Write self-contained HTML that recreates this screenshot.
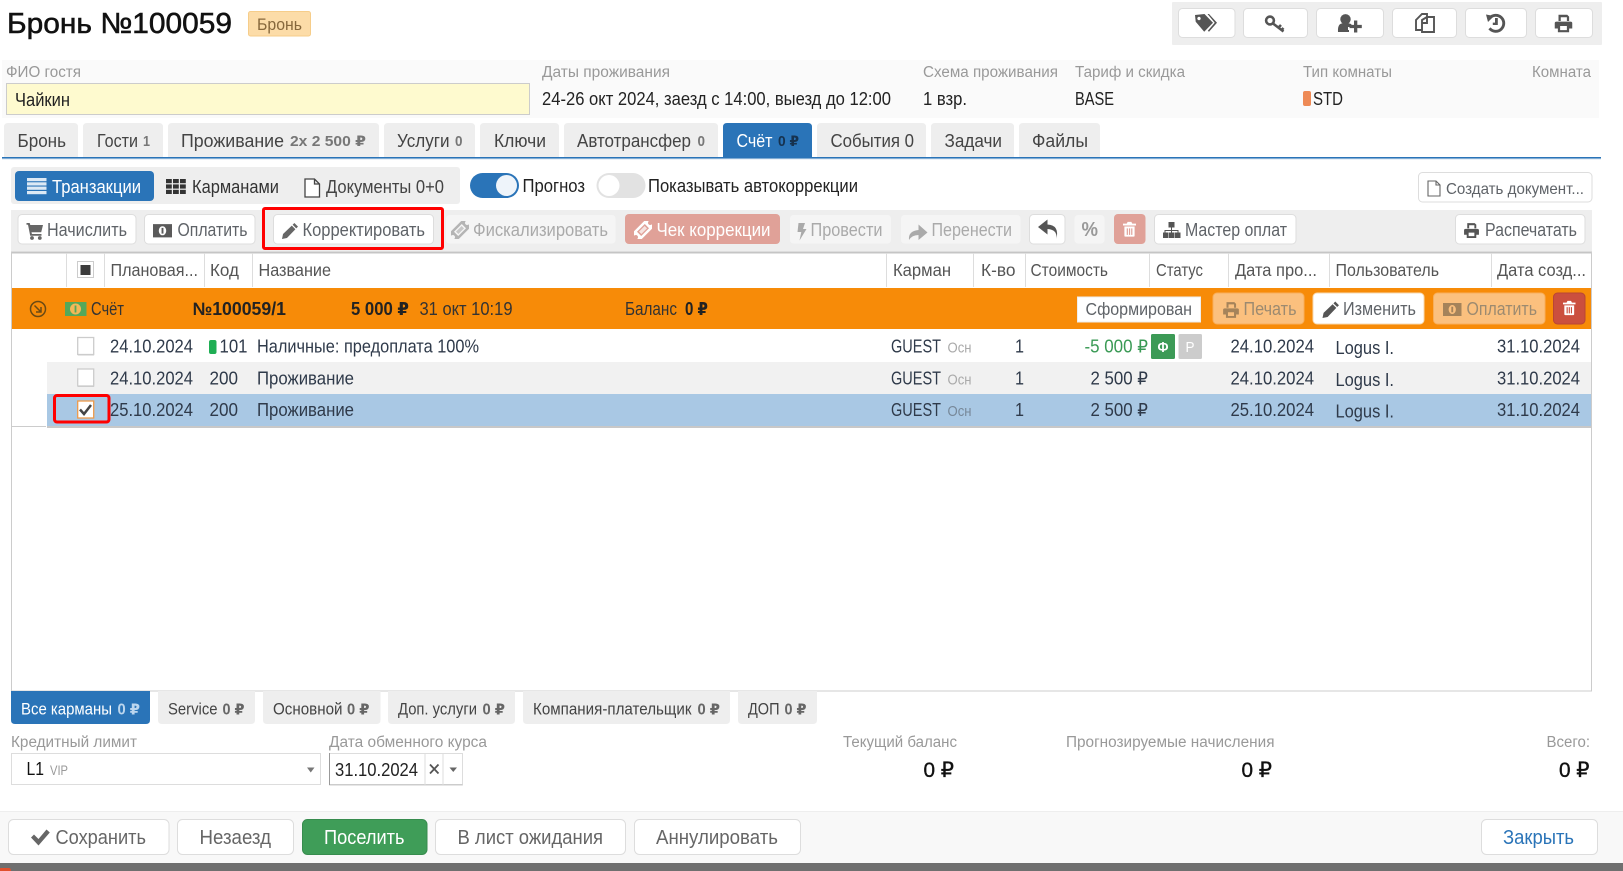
<!DOCTYPE html>
<html lang="ru"><head><meta charset="utf-8"><title>Бронь №100059</title>
<style>
html,body{margin:0;padding:0;background:#fff;width:1623px;height:871px;overflow:hidden}
svg{display:block}
text{font-family:"Liberation Sans","DejaVu Sans",sans-serif;font-size:18px;fill:#333}
.lb{font-size:15.5px;fill:#999}
.v{font-size:18px;fill:#222}
.tab{font-size:18.5px;fill:#444}
.sm{font-size:14.5px;font-weight:bold;fill:#777}
.btn{font-size:18px;fill:#5f6368}
.dis{font-size:18px;fill:#aaa}
.h{font-size:17.5px;fill:#555}
.r{font-size:18px;fill:#2f3a4a}
.t2{font-size:16.5px;fill:#444}
.b2{font-size:15.5px;font-weight:bold;fill:#666}
.f{font-size:20px;fill:#666}
.big{font-size:21px;fill:#111;stroke:#111;stroke-width:.35px}
.bb{fill:#fff;stroke:#ddd}
.bd{fill:#f5f5f5;stroke:#eee}
</style></head><body>
<svg width="1623" height="871" viewBox="0 0 1623 871" xmlns="http://www.w3.org/2000/svg">
<defs>
<symbol id="print" viewBox="0 0 16 16"><path fill-rule="evenodd" d="M4 1h7l1.500 1.500V6h-1.800V3H5.800v3H4zM1 7.700Q1 6.500 2.500 6.500h11q1.500 0 1.500 1.200V12h-2.500v3h-9v-3H1zM5.300 10v3.300h5.400V10z"/></symbol>
<symbol id="cash" viewBox="0 0 20 14"><path fill-rule="evenodd" d="M0 0h20v14H0zM10 2.200a3.900 4.800 0 1 0 .01 0z"/><rect x="9" y="4" width="2" height="6"/></symbol>
<symbol id="trash" viewBox="0 0 14 16"><path fill-rule="evenodd" d="M5 0h4l1 2h4v2H0V2h4zM1.500 5h11v10q0 1-1 1h-9q-1 0-1-1zM4 7v7h1.300V7zM6.400 7v7h1.300V7zM8.800 7v7h1.300V7z"/></symbol>
<symbol id="pencil" viewBox="0 0 16 16"><path d="M12 .5l3.500 3.500-1.700 1.700-3.500-3.500zM9.500 3l3.500 3.500L4.800 15 0 16l1-4.800z"/></symbol>
<symbol id="ticket" viewBox="0 0 18 18"><g transform="translate(9 9) rotate(-45)"><path fill-rule="evenodd" d="M-10-5.500H10v3.500a2 2 0 0 0 0 4v3.500H-10V2a2 2 0 0 0 0-4zM-5.500-3v6h11v-6z"/><rect x="-4" y="-1.700" width="8" height="3.400" opacity=".7"/></g></symbol>
</defs>

<!-- header -->
<text x="7" y="33" style="font-size:29px;fill:#111;stroke:#111;stroke-width:.55px" textLength="225" lengthAdjust="spacingAndGlyphs">Бронь №100059</text>
<rect x="248.500" y="11.500" width="62" height="24.500" rx="2" fill="#fcdca8" stroke="#f6cd8a"/>
<text x="257" y="30" style="font-size:17px;fill:#87683c" textLength="45" lengthAdjust="spacingAndGlyphs">Бронь</text>

<rect x="1172" y="2" width="430" height="43" fill="#eee" rx="1"/>
<g class="bb">
<rect x="1178.500" y="8.500" width="56.500" height="29" rx="4"/><rect x="1243.500" y="8.500" width="64" height="29" rx="4"/><rect x="1316.500" y="8.500" width="67" height="29" rx="4"/><rect x="1392.500" y="8.500" width="64" height="29" rx="4"/><rect x="1465.500" y="8.500" width="61" height="29" rx="4"/><rect x="1535.500" y="8.500" width="57" height="29" rx="4"/>
</g>
<g fill="#555">
<!-- tags -->
<path fill-rule="evenodd" d="M1195 15l9.500-1 8.500 8.700-8.800 9-8.500-10zM1199 16.800a1.700 1.700 0 1 0 .01 0z"/><path d="M1207.500 14h1.500l8 8.700-8 9-1.200-1 6.900-8z"/>
<!-- user plus -->
<circle cx="1345.500" cy="19.300" r="5.200"/><path d="M1338 32q-.5-7.500 3.500-8.500h8q1.500.3 2 1v2.500h-3.500v3h1v2z"/><path d="M1354 20.500h3.300v4.400h4.500v3.200h-4.500v4.400H1354v-4.400h-4.500v-3.200h4.500z"/>
<!-- history -->
<path d="M1486 14.500l8 1.500-6 6z"/><path d="M1495 18h2.800v7h-5v-2.400h2.200z"/>
</g>
<!-- key -->
<g fill="none" stroke="#555"><circle cx="1270" cy="20.500" r="3.900" stroke-width="2.600"/><path d="M1273 23.500l10.500 8M1278.500 27.500l2.500-2.500M1281.500 30l2-2" stroke-width="2.600"/></g>
<!-- copy -->
<g fill="none" stroke="#555" stroke-width="1.900"><path d="M1427 17.500v-3.500h-5l-6 6v10h6"/><path d="M1422 20l5-3h7v15h-12z"/><path d="M1427 17.500v5.500h-5"/></g>
<path d="M1489.500 18.300A8 8 0 1 1 1489.500 28.300" fill="none" stroke="#555" stroke-width="2.900"/>
<use href="#print" x="1553.500" y="13.500" width="20" height="20" fill="#555"/>

<!-- info -->
<rect x="2" y="60" width="1597" height="58" fill="#fafafa"/>
<text class="lb" x="6" y="77" textLength="75" lengthAdjust="spacingAndGlyphs">ФИО гостя</text>
<text class="lb" x="542" y="77" textLength="128" lengthAdjust="spacingAndGlyphs">Даты проживания</text>
<text class="lb" x="923" y="77" textLength="135" lengthAdjust="spacingAndGlyphs">Схема проживания</text>
<text class="lb" x="1075" y="77" textLength="110" lengthAdjust="spacingAndGlyphs">Тариф и скидка</text>
<text class="lb" x="1303" y="77" textLength="89" lengthAdjust="spacingAndGlyphs">Тип комнаты</text>
<text class="lb" x="1532" y="77" textLength="59" lengthAdjust="spacingAndGlyphs">Комната</text>
<rect x="6.500" y="83.500" width="523" height="31" fill="#fefacf" stroke="#ccc"/>
<text class="v" x="15" y="106" textLength="55" lengthAdjust="spacingAndGlyphs">Чайкин</text>
<text class="v" x="542" y="105" textLength="349" lengthAdjust="spacingAndGlyphs">24-26 окт 2024, заезд с 14:00, выезд до 12:00</text>
<text class="v" x="923" y="105" textLength="44" lengthAdjust="spacingAndGlyphs">1 взр.</text>
<text class="v" x="1075" y="105" textLength="39" lengthAdjust="spacingAndGlyphs">BASE</text>
<rect x="1303" y="91" width="8" height="15" rx="2" fill="#ee8a56"/>
<text class="v" x="1313" y="105" textLength="30" lengthAdjust="spacingAndGlyphs">STD</text>

<!-- tabs -->
<g fill="#eee">
<path d="M4 157v-30q0-4 4-4h66q4 0 4 4v30z"/>
<path d="M83 157v-30q0-4 4-4h72q4 0 4 4v30z"/>
<path d="M168 157v-30q0-4 4-4h203q4 0 4 4v30z"/>
<path d="M384 157v-30q0-4 4-4h83q4 0 4 4v30z"/>
<path d="M480 157v-30q0-4 4-4h71q4 0 4 4v30z"/>
<path d="M564 157v-30q0-4 4-4h146q4 0 4 4v30z"/>
<path d="M723 157v-30q0-4 4-4h81q4 0 4 4v30z" fill="#2a74b8"/>
<path d="M817 157v-30q0-4 4-4h101q4 0 4 4v30z"/>
<path d="M931 157v-30q0-4 4-4h75q4 0 4 4v30z"/>
<path d="M1019 157v-30q0-4 4-4h73q4 0 4 4v30z"/>
</g>
<rect x="2" y="157" width="1599" height="1.500" fill="#2a74b8"/><rect x="2" y="158.500" width="1599" height="1" fill="#d5e3f1"/>
<text class="tab" x="17.500" y="147" textLength="48.500" lengthAdjust="spacingAndGlyphs">Бронь</text>
<text class="tab" x="97" y="147" textLength="41" lengthAdjust="spacingAndGlyphs">Гости</text><text class="sm" x="143" y="146" textLength="7" lengthAdjust="spacingAndGlyphs">1</text>
<text class="tab" x="181" y="147" textLength="103" lengthAdjust="spacingAndGlyphs">Проживание</text><text class="sm" x="290" y="146" textLength="76" lengthAdjust="spacingAndGlyphs">2x 2 500 ₽</text>
<text class="tab" x="397" y="147" textLength="52.500" lengthAdjust="spacingAndGlyphs">Услуги</text><text class="sm" x="455" y="146" textLength="7.500" lengthAdjust="spacingAndGlyphs">0</text>
<text class="tab" x="494" y="147" textLength="52" lengthAdjust="spacingAndGlyphs">Ключи</text>
<text class="tab" x="577" y="147" textLength="114" lengthAdjust="spacingAndGlyphs">Автотрансфер</text><text class="sm" x="697.500" y="146" textLength="7.500" lengthAdjust="spacingAndGlyphs">0</text>
<text class="tab" style="fill:#fff" x="736.500" y="147" textLength="36" lengthAdjust="spacingAndGlyphs">Счёт</text><text class="sm" style="fill:#16324f" x="778" y="146" textLength="21" lengthAdjust="spacingAndGlyphs">0 ₽</text>
<text class="tab" x="830.500" y="147" textLength="83.500" lengthAdjust="spacingAndGlyphs">События 0</text>
<text class="tab" x="944.500" y="147" textLength="57.500" lengthAdjust="spacingAndGlyphs">Задачи</text>
<text class="tab" x="1032" y="147" textLength="56" lengthAdjust="spacingAndGlyphs">Файлы</text>

<!-- view switch -->
<rect x="11" y="167" width="449" height="37" rx="3" fill="#eee"/>
<rect x="15" y="171" width="139" height="30" rx="4" fill="#2a74b8"/>
<g fill="#dce9f5"><rect x="27" y="178" width="19.500" height="3.200"/><rect x="27" y="182.300" width="19.500" height="3.200"/><rect x="27" y="186.600" width="19.500" height="3.200"/><rect x="27" y="191" width="19.500" height="3.200"/></g>
<text class="v" style="fill:#fff" x="52" y="193" textLength="89" lengthAdjust="spacingAndGlyphs">Транзакции</text>
<g fill="#333"><rect x="166" y="179" width="5.800" height="4.200"/><rect x="173" y="179" width="5.800" height="4.200"/><rect x="180" y="179" width="5.800" height="4.200"/><rect x="166" y="184.400" width="5.800" height="4.200"/><rect x="173" y="184.400" width="5.800" height="4.200"/><rect x="180" y="184.400" width="5.800" height="4.200"/><rect x="166" y="189.800" width="5.800" height="4.200"/><rect x="173" y="189.800" width="5.800" height="4.200"/><rect x="180" y="189.800" width="5.800" height="4.200"/></g>
<text class="v" style="fill:#333" x="192" y="193" textLength="87" lengthAdjust="spacingAndGlyphs">Карманами</text>
<path d="M305 179h9.500l5 5v13H305zM314.500 179v5h5" fill="#fff" stroke="#444" stroke-width="1.300"/>
<text class="v" style="fill:#444" x="326" y="193" textLength="118" lengthAdjust="spacingAndGlyphs">Документы 0+0</text>
<rect x="470" y="173" width="49" height="25" rx="12.500" fill="#2a74b8"/><circle cx="506.500" cy="185.500" r="10.500" fill="#eef4fa"/>
<text class="v" x="522.500" y="192" textLength="62.500" lengthAdjust="spacingAndGlyphs">Прогноз</text>
<rect x="596.500" y="173" width="49" height="25" rx="12.500" fill="#e2e2e2"/><circle cx="609" cy="185.500" r="10.500" fill="#fff"/>
<text class="v" x="648" y="192" textLength="210" lengthAdjust="spacingAndGlyphs">Показывать автокоррекции</text>
<rect class="bb" x="1418.500" y="172.500" width="173.500" height="29.500" rx="4"/>
<path d="M1428 181h8l4 4v11h-12zM1436 181v4h4" fill="#fff" stroke="#666" stroke-width="1.100"/>
<text class="btn" style="font-size:16px" x="1446" y="194" textLength="138" lengthAdjust="spacingAndGlyphs">Создать документ...</text>

<!-- toolbar -->
<rect x="11" y="210" width="1581" height="42" fill="#eee"/>
<rect class="bb" x="18" y="214.500" width="118" height="29.500" rx="4"/>
<rect class="bb" x="144.500" y="214.500" width="110.500" height="29.500" rx="4"/>
<rect class="bb" x="273.500" y="214.500" width="160" height="29.500" rx="4"/>
<rect class="bd" x="445.500" y="214.500" width="170.500" height="29.500" rx="4"/>
<rect x="625" y="214" width="155" height="30" rx="4" fill="#e0a198"/>
<rect class="bd" x="789.500" y="214.500" width="102" height="29.500" rx="4"/>
<rect class="bd" x="900.500" y="214.500" width="120.500" height="29.500" rx="4"/>
<rect class="bb" x="1029.500" y="214.500" width="35.500" height="29.500" rx="4"/>
<rect class="bd" x="1074" y="214.500" width="31" height="29.500" rx="4"/>
<rect x="1114" y="214" width="31.500" height="30" rx="4" fill="#e0a198"/>
<rect class="bb" x="1154.500" y="214.500" width="141.500" height="29.500" rx="4"/>
<rect class="bb" x="1455.500" y="214.500" width="129.500" height="29.500" rx="4"/>
<path d="M26.500 223h3.200l.6 2H43l-1.800 7.300H31.500l.4 1.700h9.600v1.800H30.200L28 224.800h-1.500z" fill="#666"/><circle cx="32" cy="238" r="1.900" fill="#666"/><circle cx="39.800" cy="238" r="1.900" fill="#666"/>
<text class="btn" x="47" y="236" textLength="80" lengthAdjust="spacingAndGlyphs">Начислить</text>
<use href="#cash" x="153" y="224" width="19" height="13.500" fill="#5a5a5a"/>
<text class="btn" x="177.500" y="236" textLength="70" lengthAdjust="spacingAndGlyphs">Оплатить</text>
<use href="#pencil" x="282" y="222.500" width="16.500" height="16.500" fill="#666"/>
<text class="btn" x="302.500" y="236" textLength="122.500" lengthAdjust="spacingAndGlyphs">Корректировать</text>
<use href="#ticket" x="451" y="221" width="18" height="18" fill="#b4b4b4"/>
<text class="dis" x="473" y="236" textLength="135" lengthAdjust="spacingAndGlyphs">Фискализировать</text>
<use href="#ticket" x="634" y="221" width="18" height="18" fill="#fff"/>
<text class="dis" style="fill:#fff" x="656.500" y="236" textLength="114" lengthAdjust="spacingAndGlyphs">Чек коррекции</text>
<path d="M798.500 223h6.500l-2 6h3.500l-7 11.500 1.800-8.500h-3.800z" fill="#aaa"/>
<text class="dis" x="810.500" y="236" textLength="72" lengthAdjust="spacingAndGlyphs">Провести</text>
<path d="M909 240q-1-9 9.500-10v-5.500l9 8-9 7.500v-5q-6.500 0-9.500 5z" fill="#aaa"/>
<text class="dis" x="931.500" y="236" textLength="80.500" lengthAdjust="spacingAndGlyphs">Перенести</text>
<path d="M1056.500 239q1-9.500-9-10v5.500l-9.500-7.500 9.500-7.500v5q12 .5 9 14.500z" fill="#555"/>
<text x="1081.500" y="236" style="font-size:20px;font-weight:bold;fill:#999" textLength="16.500" lengthAdjust="spacingAndGlyphs">%</text>
<use href="#trash" x="1123" y="221.500" width="13" height="15.500" fill="#fff"/>
<g fill="#555"><rect x="1168.500" y="222" width="6" height="5.500"/><rect x="1163" y="232.500" width="5.500" height="5.500"/><rect x="1169" y="232.500" width="5.500" height="5.500"/><rect x="1175" y="232.500" width="5.500" height="5.500"/><path d="M1171 227.500h1v2.500h6.500v2.500h-1V231H1172v1.500h-1V231h-5.500v1.500h-1V230h6.500z"/></g>
<text class="btn" x="1185" y="236" textLength="102" lengthAdjust="spacingAndGlyphs">Мастер оплат</text>
<use href="#print" x="1463" y="222" width="17" height="17" fill="#555"/>
<text class="btn" x="1485" y="236" textLength="92" lengthAdjust="spacingAndGlyphs">Распечатать</text>

<!-- table frame -->
<rect x="11.500" y="252" width="1580" height="439" fill="#fff" stroke="#ccc"/>
<rect x="12" y="252" width="1579" height="1.500" fill="#c5c5c5"/>
<g fill="#ddd"><rect x="66" y="253" width="1" height="34"/><rect x="104" y="253" width="1" height="34"/><rect x="204" y="253" width="1" height="34"/><rect x="252" y="253" width="1" height="34"/><rect x="886" y="253" width="1" height="34"/><rect x="973" y="253" width="1" height="34"/><rect x="1025" y="253" width="1" height="34"/><rect x="1149" y="253" width="1" height="34"/><rect x="1228" y="253" width="1" height="34"/><rect x="1329" y="253" width="1" height="34"/><rect x="1491" y="253" width="1" height="34"/></g>
<rect x="77.500" y="261.500" width="16" height="16" fill="#fff" stroke="#ccc"/><rect x="80.500" y="265" width="10" height="10" fill="#3c3c3c"/>
<text class="h" x="110.500" y="276" textLength="87.500" lengthAdjust="spacingAndGlyphs">Плановая...</text>
<text class="h" x="210" y="276" textLength="29" lengthAdjust="spacingAndGlyphs">Код</text>
<text class="h" x="258.500" y="276" textLength="72.500" lengthAdjust="spacingAndGlyphs">Название</text>
<text class="h" x="893" y="276" textLength="58" lengthAdjust="spacingAndGlyphs">Карман</text>
<text class="h" x="981" y="276" textLength="34.500" lengthAdjust="spacingAndGlyphs">К-во</text>
<text class="h" x="1030.500" y="276" textLength="77.500" lengthAdjust="spacingAndGlyphs">Стоимость</text>
<text class="h" x="1156" y="276" textLength="47" lengthAdjust="spacingAndGlyphs">Статус</text>
<text class="h" x="1235" y="276" textLength="82" lengthAdjust="spacingAndGlyphs">Дата про...</text>
<text class="h" x="1335.500" y="276" textLength="103.500" lengthAdjust="spacingAndGlyphs">Пользователь</text>
<text class="h" x="1497" y="276" textLength="89" lengthAdjust="spacingAndGlyphs">Дата созд...</text>

<!-- orange row -->
<rect x="12" y="288" width="1579" height="41" fill="#f78b08"/>
<circle cx="38" cy="309" r="7.500" fill="none" stroke="#6b4a14" stroke-width="1.500"/><path d="M34.500 305.500l6 6M41 307v5h-5" fill="none" stroke="#6b4a14" stroke-width="1.500"/>
<rect x="65" y="302" width="21.500" height="14" fill="#54a85a"/><ellipse cx="75.500" cy="309" rx="5.500" ry="5.500" fill="#f4b858"/><rect x="74.600" y="305.500" width="1.800" height="7" fill="#54a85a"/>
<text class="r" style="fill:#333" x="91" y="315" textLength="33" lengthAdjust="spacingAndGlyphs">Счёт</text>
<text class="r" style="font-weight:bold;fill:#222" x="192.500" y="315" textLength="93.500" lengthAdjust="spacingAndGlyphs">№100059/1</text>
<text class="r" style="font-weight:bold;fill:#222" x="351" y="315" textLength="58" lengthAdjust="spacingAndGlyphs">5 000 ₽</text>
<text class="r" style="fill:#333" x="419.500" y="315" textLength="93" lengthAdjust="spacingAndGlyphs">31 окт 10:19</text>
<text class="r" style="fill:#333" x="625" y="315" textLength="52" lengthAdjust="spacingAndGlyphs">Баланс</text>
<text class="r" style="font-weight:bold;fill:#222" x="685" y="315" textLength="23" lengthAdjust="spacingAndGlyphs">0 ₽</text>
<rect x="1077.500" y="297" width="123" height="25" fill="#fff" stroke="#eee"/>
<text class="btn" style="font-size:17.500px" x="1085.500" y="315" textLength="106.500" lengthAdjust="spacingAndGlyphs">Сформирован</text>
<rect x="1213" y="293" width="91" height="31" rx="4" fill="#fbc07e" stroke="#f8ae5a"/>
<use href="#print" x="1222" y="301" width="18" height="18" fill="#a5835a"/>
<text class="btn" style="fill:#9c8a70" x="1243.500" y="315" textLength="53" lengthAdjust="spacingAndGlyphs">Печать</text>
<rect x="1313" y="293" width="111" height="31" rx="4" fill="#fff" stroke="#f7d9b0"/>
<use href="#pencil" x="1322.500" y="301" width="17" height="17" fill="#555"/>
<text class="btn" x="1343" y="315" textLength="73" lengthAdjust="spacingAndGlyphs">Изменить</text>
<rect x="1433.500" y="293" width="111.500" height="31" rx="4" fill="#fbc07e" stroke="#f8ae5a"/>
<use href="#cash" x="1443" y="303" width="18.500" height="13" fill="#a5835a"/>
<text class="btn" style="fill:#9c8a70" x="1466.500" y="315" textLength="70.500" lengthAdjust="spacingAndGlyphs">Оплатить</text>
<rect x="1553.500" y="293" width="31.500" height="31" rx="4" fill="#cb4f3e" stroke="#b94535"/>
<use href="#trash" x="1563" y="300.500" width="12.500" height="15" fill="#fff"/>

<!-- rows -->
<rect x="47" y="362" width="1544" height="32" fill="#f1f1f1"/>
<rect x="47" y="394" width="1544" height="32" fill="#a9c8e4"/>
<rect x="12" y="426" width="34" height="1" fill="#ccc"/><rect x="47" y="426" width="1544" height="2" fill="#c8c8c8"/>
<g fill="#fff" stroke="#ccc" stroke-width="1.300"><rect x="77.700" y="337.500" width="16" height="17"/><rect x="77.700" y="369" width="16" height="17"/></g>
<rect x="78" y="354" width="16" height="1.500" fill="#ccc"/><rect x="78" y="385.500" width="16" height="1.500" fill="#ccc"/>
<rect x="54.500" y="395.500" width="54.500" height="26.500" rx="2.500" fill="none" stroke="#f00" stroke-width="3"/>
<rect x="77.700" y="401" width="16" height="17" fill="#fff" stroke="#ee9a4a" stroke-width="1.300"/>
<path d="M80 409.500l4 4.500 7-9" fill="none" stroke="#444" stroke-width="2.500"/>
<rect x="263.500" y="208.500" width="179" height="40" rx="1.500" fill="none" stroke="#f00" stroke-width="3"/>

<text class="r" x="110" y="352.500" textLength="83" lengthAdjust="spacingAndGlyphs">24.10.2024</text>
<rect x="209" y="340" width="7.500" height="14" rx="2" fill="#1fae54"/>
<text class="r" x="219.500" y="352.500" textLength="28" lengthAdjust="spacingAndGlyphs">101</text>
<text class="r" x="257" y="352.500" textLength="222" lengthAdjust="spacingAndGlyphs">Наличные: предоплата 100%</text>
<text class="r" x="891" y="352.500" textLength="50" lengthAdjust="spacingAndGlyphs">GUEST</text>
<text class="lb" style="font-size:15px;fill:#aaa" x="947.500" y="352.500" textLength="24" lengthAdjust="spacingAndGlyphs">Осн</text>
<text class="r" x="1015" y="352.500" textLength="9" lengthAdjust="spacingAndGlyphs">1</text>
<text class="r" style="fill:#3a9a55" x="1084.500" y="352.500" textLength="63.500" lengthAdjust="spacingAndGlyphs">-5 000 ₽</text>
<rect x="1151" y="334" width="24" height="25" rx="1.500" fill="#3c9a56"/>
<text style="font-size:15px;font-weight:bold;fill:#fff" x="1157.500" y="352" textLength="11" lengthAdjust="spacingAndGlyphs">Ф</text>
<rect x="1178.500" y="334" width="23.500" height="25" rx="1.500" fill="#ccc"/>
<text style="font-size:15px;fill:#fff" x="1185.500" y="352" textLength="9" lengthAdjust="spacingAndGlyphs">Р</text>
<text class="r" x="1230.500" y="352.500" textLength="83.500" lengthAdjust="spacingAndGlyphs">24.10.2024</text>
<text class="r" x="1335.500" y="354" textLength="58.500" lengthAdjust="spacingAndGlyphs">Logus I.</text>
<text class="r" x="1497" y="352.500" textLength="83" lengthAdjust="spacingAndGlyphs">31.10.2024</text>

<text class="r" x="110" y="384.500" textLength="83" lengthAdjust="spacingAndGlyphs">24.10.2024</text>
<text class="r" x="209.500" y="384.500" textLength="28.500" lengthAdjust="spacingAndGlyphs">200</text>
<text class="r" x="257" y="384.500" textLength="97" lengthAdjust="spacingAndGlyphs">Проживание</text>
<text class="r" x="891" y="384.500" textLength="50" lengthAdjust="spacingAndGlyphs">GUEST</text>
<text class="lb" style="font-size:15px;fill:#aaa" x="947.500" y="384.500" textLength="24" lengthAdjust="spacingAndGlyphs">Осн</text>
<text class="r" x="1015" y="384.500" textLength="9" lengthAdjust="spacingAndGlyphs">1</text>
<text class="r" x="1090.500" y="384.500" textLength="57.500" lengthAdjust="spacingAndGlyphs">2 500 ₽</text>
<text class="r" x="1230.500" y="384.500" textLength="83.500" lengthAdjust="spacingAndGlyphs">24.10.2024</text>
<text class="r" x="1335.500" y="386" textLength="58.500" lengthAdjust="spacingAndGlyphs">Logus I.</text>
<text class="r" x="1497" y="384.500" textLength="83" lengthAdjust="spacingAndGlyphs">31.10.2024</text>

<text class="r" x="110" y="416" textLength="83" lengthAdjust="spacingAndGlyphs">25.10.2024</text>
<text class="r" x="209.500" y="416" textLength="28.500" lengthAdjust="spacingAndGlyphs">200</text>
<text class="r" x="257" y="416" textLength="97" lengthAdjust="spacingAndGlyphs">Проживание</text>
<text class="r" x="891" y="416" textLength="50" lengthAdjust="spacingAndGlyphs">GUEST</text>
<text class="lb" style="font-size:15px;fill:#789" x="947.500" y="416" textLength="24" lengthAdjust="spacingAndGlyphs">Осн</text>
<text class="r" x="1015" y="416" textLength="9" lengthAdjust="spacingAndGlyphs">1</text>
<text class="r" x="1090.500" y="416" textLength="57.500" lengthAdjust="spacingAndGlyphs">2 500 ₽</text>
<text class="r" x="1230.500" y="416" textLength="83.500" lengthAdjust="spacingAndGlyphs">25.10.2024</text>
<text class="r" x="1335.500" y="417.500" textLength="58.500" lengthAdjust="spacingAndGlyphs">Logus I.</text>
<text class="r" x="1497" y="416" textLength="83" lengthAdjust="spacingAndGlyphs">31.10.2024</text>

<!-- pocket tabs -->
<g fill="#eee">
<path d="M11 691h139v29q0 4-4 4H15q-4 0-4-4z" fill="#2a74b8"/>
<path d="M158 691h97v29q0 4-4 4h-89q-4 0-4-4z"/>
<path d="M263 691h117.500v29q0 4-4 4H267q-4 0-4-4z"/>
<path d="M388 691h127v29q0 4-4 4H392q-4 0-4-4z"/>
<path d="M523 691h207v29q0 4-4 4H527q-4 0-4-4z"/>
<path d="M738 691h79v29q0 4-4 4H742q-4 0-4-4z"/>
</g>
<text class="t2" style="fill:#fff" x="21" y="714.500" textLength="91" lengthAdjust="spacingAndGlyphs">Все карманы</text><text class="b2" style="fill:#bcd6ee" x="117.500" y="714.500" textLength="22.500" lengthAdjust="spacingAndGlyphs">0 ₽</text>
<text class="t2" x="168" y="714.500" textLength="49.500" lengthAdjust="spacingAndGlyphs">Service</text><text class="b2" x="222.500" y="714.500" textLength="22" lengthAdjust="spacingAndGlyphs">0 ₽</text>
<text class="t2" x="273" y="714.500" textLength="69.500" lengthAdjust="spacingAndGlyphs">Основной</text><text class="b2" x="347" y="714.500" textLength="22.500" lengthAdjust="spacingAndGlyphs">0 ₽</text>
<text class="t2" x="398" y="714.500" textLength="79" lengthAdjust="spacingAndGlyphs">Доп. услуги</text><text class="b2" x="482.500" y="714.500" textLength="22.500" lengthAdjust="spacingAndGlyphs">0 ₽</text>
<text class="t2" x="533" y="714.500" textLength="158.500" lengthAdjust="spacingAndGlyphs">Компания-плательщик</text><text class="b2" x="697.500" y="714.500" textLength="22.500" lengthAdjust="spacingAndGlyphs">0 ₽</text>
<text class="t2" x="748" y="714.500" textLength="31.500" lengthAdjust="spacingAndGlyphs">ДОП</text><text class="b2" x="784.500" y="714.500" textLength="22" lengthAdjust="spacingAndGlyphs">0 ₽</text>

<!-- bottom fields -->
<text class="lb" x="11" y="747" textLength="126" lengthAdjust="spacingAndGlyphs">Кредитный лимит</text>
<text class="lb" x="329" y="747" textLength="158" lengthAdjust="spacingAndGlyphs">Дата обменного курса</text>
<text class="lb" x="843" y="747" textLength="114" lengthAdjust="spacingAndGlyphs">Текущий баланс</text>
<text class="lb" x="1066" y="747" textLength="208.500" lengthAdjust="spacingAndGlyphs">Прогнозируемые начисления</text>
<text class="lb" x="1546.500" y="747" textLength="43.500" lengthAdjust="spacingAndGlyphs">Всего:</text>
<rect x="11.500" y="753.500" width="309" height="31" fill="#fff" stroke="#ddd"/>
<text class="v" style="fill:#111" x="26.500" y="775" textLength="17.500" lengthAdjust="spacingAndGlyphs">L1</text>
<text class="lb" style="font-size:14px;fill:#999" x="50" y="775" textLength="18" lengthAdjust="spacingAndGlyphs">VIP</text>
<path d="M307 767.500h7.500l-3.750 5z" fill="#777"/>
<rect x="329.500" y="753.500" width="133" height="31.500" fill="#fff" stroke="#ddd"/>
<rect x="329.500" y="784" width="133" height="1.500" fill="#ccc"/>
<rect x="329" y="753" width="1" height="32" fill="#999"/>
<rect x="424.500" y="754" width="1" height="31" fill="#ddd"/><rect x="442.500" y="754" width="1" height="31" fill="#ddd"/>
<text class="v" x="335" y="776" textLength="83" lengthAdjust="spacingAndGlyphs">31.10.2024</text>
<path d="M430 764.500l8.500 9M438.500 764.500l-8.500 9" stroke="#555" stroke-width="1.800" fill="none"/>
<path d="M449.500 767.500h7.500l-3.750 4.500z" fill="#666"/>
<text class="big" x="923.500" y="777" textLength="30.500" lengthAdjust="spacingAndGlyphs">0 ₽</text>
<text class="big" x="1241.500" y="777" textLength="30.500" lengthAdjust="spacingAndGlyphs">0 ₽</text>
<text class="big" x="1559" y="777" textLength="30.500" lengthAdjust="spacingAndGlyphs">0 ₽</text>

<!-- footer -->
<rect x="0" y="811" width="1623" height="52" fill="#f8f8f8"/><rect x="0" y="811" width="1623" height="1" fill="#eee"/>
<rect x="0" y="863" width="1623" height="8" fill="#6f6f6f"/><path d="M0 871v-2.500q0-.5 1-.5h8q2 0 2 3z" fill="#e0502e"/>
<rect class="bb" x="8.500" y="819.500" width="160.500" height="35" rx="5"/>
<rect class="bb" x="177.500" y="819.500" width="116" height="35" rx="5"/>
<rect x="302.500" y="819.500" width="124.500" height="35" rx="5" fill="#3f9d58" stroke="#378c4e"/>
<rect class="bb" x="435.500" y="819.500" width="190" height="35" rx="5"/>
<rect class="bb" x="634.500" y="819.500" width="166" height="35" rx="5"/>
<rect class="bb" x="1481.500" y="819.500" width="116" height="35" rx="5"/>
<path d="M31 837.500l3-3 4.500 4.500 8-9.500 3.300 3-11.300 13z" fill="#666"/>
<text class="f" x="55.500" y="844" textLength="90.500" lengthAdjust="spacingAndGlyphs">Сохранить</text>
<text class="f" x="199.500" y="844" textLength="71.500" lengthAdjust="spacingAndGlyphs">Незаезд</text>
<text class="f" style="fill:#fff" x="324" y="844" textLength="80.500" lengthAdjust="spacingAndGlyphs">Поселить</text>
<text class="f" x="457.500" y="844" textLength="145.500" lengthAdjust="spacingAndGlyphs">В лист ожидания</text>
<text class="f" x="656" y="844" textLength="122" lengthAdjust="spacingAndGlyphs">Аннулировать</text>
<text class="f" style="fill:#2a74b8" x="1503" y="844" textLength="71" lengthAdjust="spacingAndGlyphs">Закрыть</text>
</svg>
</body></html>
